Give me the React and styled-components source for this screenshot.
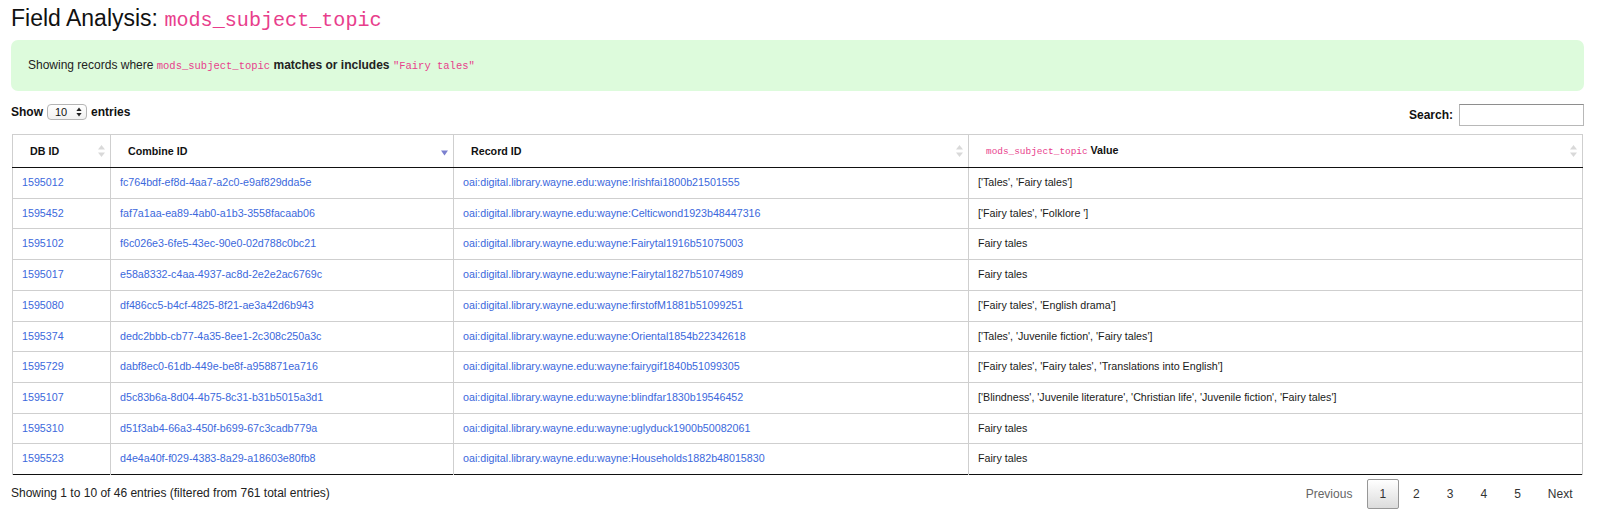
import React from "react";
import styled, { createGlobalStyle } from "styled-components";

const GlobalStyle = createGlobalStyle`
  html, body { margin: 0; padding: 0; background: #fff; }
  body {
    font-family: "Liberation Sans", Arial, Helvetica, sans-serif;
    color: #111;
  }
`;

const Page = styled.div`
  padding: 0 16px 0 11px;
`;

const Code = styled.code`
  font-family: "Liberation Mono", "DejaVu Sans Mono", monospace;
  font-size: 87.5%;
  color: #e83e8c;
`;

const Title = styled.h1`
  margin: 4px 0 0;
  font-size: 23px;
  line-height: 28px;
  font-weight: normal;
  color: #111;
`;

const Alert = styled.div`
  margin-top: 5px;
  background: #ddfbdc;
  border-radius: 7px;
  padding: 16px 17px;
  font-size: 12px;
  line-height: 18px;
  color: #222;
`;

const Controls = styled.div`
  margin-top: 13px;
  display: flex;
  justify-content: space-between;
  align-items: flex-start;
`;

const LengthLabel = styled.label`
  display: flex;
  align-items: center;
  gap: 4px;
  font-size: 12px;
  font-weight: bold;
  line-height: 16px;
  color: #111;
`;

const SelectWrap = styled.span`
  position: relative;
  display: inline-block;
  width: 40px;
  height: 16px;
`;

const Select = styled.select`
  appearance: none;
  -webkit-appearance: none;
  width: 40px;
  height: 16px;
  box-sizing: border-box;
  margin: 0;
  padding: 0 0 0 7px;
  border: 1px solid #b5b5b5;
  border-radius: 4px;
  background: linear-gradient(#ffffff, #f1f1f1);
  font-family: "Liberation Sans", Arial, sans-serif;
  font-size: 11px;
  line-height: 14px;
  color: #111;
`;

const SelectArrow = styled.svg`
  position: absolute;
  right: 5px;
  top: 3px;
  pointer-events: none;
`;

const SearchLabel = styled.label`
  display: flex;
  align-items: center;
  gap: 6px;
  font-size: 12px;
  font-weight: bold;
  color: #111;
`;

const SearchInput = styled.input`
  width: 125px;
  height: 22px;
  box-sizing: border-box;
  margin: 0;
  border: 1px solid #b8b8b8;
  border-top-color: #8e8e8e;
  padding: 2px 4px;
  font-size: 12px;
`;

const Table = styled.table`
  margin: 8px 0 0 1px;
  width: 1570px;
  table-layout: fixed;
  border-collapse: collapse;
  font-size: 10.7px;
  border-bottom: 1px solid #111;
`;

const Th = styled.th`
  position: relative;
  text-align: left;
  font-weight: bold;
  padding: 8px 18px 8px 17px;
  line-height: 14px;
  border: 1px solid #cfcfcf;
  border-bottom: 1px solid #111;
  color: #111;
  white-space: nowrap;
`;

const SortIcon = styled.svg`
  position: absolute;
  right: 5px;
  top: 50%;
  margin-top: -6px;
`;

const HeadCode = styled(Code)`
  font-size: 88%;
  font-weight: normal;
`;

const Td = styled.td`
  padding: 8px 9px;
  line-height: 13.7px;
  border-left: 1px solid #cfcfcf;
  border-right: 1px solid #cfcfcf;
  border-top: 1px solid #cfcfcf;
  color: #1a1a1a;
  white-space: nowrap;
`;

const Link = styled.a`
  color: #3b68dc;
  text-decoration: none;
`;

const Footer = styled.div`
  margin-top: 4px;
  display: flex;
  justify-content: space-between;
  align-items: flex-start;
`;

const Info = styled.div`
  padding-top: 6px;
  font-size: 12px;
  line-height: 17px;
  color: #222;
`;

const Paginate = styled.div`
  display: flex;
  margin-right: -1px;
`;

const PageButton = styled.a`
  box-sizing: border-box;
  display: inline-block;
  margin-left: 2px;
  padding: 6px 11.5px;
  font-size: 12px;
  line-height: 16px;
  border: 1px solid ${(p) => (p.$current ? "#979797" : "transparent")};
  border-radius: 2px;
  background: ${(p) => (p.$current ? "linear-gradient(#ffffff, #dcdcdc)" : "transparent")};
  color: ${(p) => (p.$disabled ? "#666" : "#333")};
  text-align: center;
`;

const SortBoth = () => (
  <SortIcon width="7" height="12" viewBox="0 0 7 12">
    <path d="M3.5 0 L7 4.5 L0 4.5 Z" fill="#d9d9d9" />
    <path d="M3.5 12 L7 7.5 L0 7.5 Z" fill="#d9d9d9" />
  </SortIcon>
);

const SortDesc = () => (
  <SortIcon width="7" height="12" viewBox="0 0 7 12">
    <path d="M3.5 10.5 L7 5.5 L0 5.5 Z" fill="#7b80cf" />
  </SortIcon>
);

const rows = [
  ["1595012", "fc764bdf-ef8d-4aa7-a2c0-e9af829dda5e", "oai:digital.library.wayne.edu:wayne:Irishfai1800b21501555", "['Tales', 'Fairy tales']"],
  ["1595452", "faf7a1aa-ea89-4ab0-a1b3-3558facaab06", "oai:digital.library.wayne.edu:wayne:Celticwond1923b48447316", "['Fairy tales', 'Folklore ']"],
  ["1595102", "f6c026e3-6fe5-43ec-90e0-02d788c0bc21", "oai:digital.library.wayne.edu:wayne:Fairytal1916b51075003", "Fairy tales"],
  ["1595017", "e58a8332-c4aa-4937-ac8d-2e2e2ac6769c", "oai:digital.library.wayne.edu:wayne:Fairytal1827b51074989", "Fairy tales"],
  ["1595080", "df486cc5-b4cf-4825-8f21-ae3a42d6b943", "oai:digital.library.wayne.edu:wayne:firstofM1881b51099251", "['Fairy tales', 'English drama']"],
  ["1595374", "dedc2bbb-cb77-4a35-8ee1-2c308c250a3c", "oai:digital.library.wayne.edu:wayne:Oriental1854b22342618", "['Tales', 'Juvenile fiction', 'Fairy tales']"],
  ["1595729", "dabf8ec0-61db-449e-be8f-a958871ea716", "oai:digital.library.wayne.edu:wayne:fairygif1840b51099305", "['Fairy tales', 'Fairy tales', 'Translations into English']"],
  ["1595107", "d5c83b6a-8d04-4b75-8c31-b31b5015a3d1", "oai:digital.library.wayne.edu:wayne:blindfar1830b19546452", "['Blindness', 'Juvenile literature', 'Christian life', 'Juvenile fiction', 'Fairy tales']"],
  ["1595310", "d51f3ab4-66a3-450f-b699-67c3cadb779a", "oai:digital.library.wayne.edu:wayne:uglyduck1900b50082061", "Fairy tales"],
  ["1595523", "d4e4a40f-f029-4383-8a29-a18603e80fb8", "oai:digital.library.wayne.edu:wayne:Households1882b48015830", "Fairy tales"],
];

export default function App() {
  return (
    <>
      <GlobalStyle />
      <Page>
        <Title>
          Field Analysis: <Code>mods_subject_topic</Code>
        </Title>
        <Alert>
          Showing records where <Code>mods_subject_topic</Code> <b>matches or includes</b>{" "}
          <Code>"Fairy tales"</Code>
        </Alert>
        <Controls>
          <LengthLabel>
            Show
            <SelectWrap>
              <Select defaultValue="10">
                <option value="10">10</option>
                <option value="25">25</option>
                <option value="50">50</option>
                <option value="100">100</option>
              </Select>
              <SelectArrow width="6" height="10" viewBox="0 0 6 10">
                <path d="M3 0.5 L5.6 4 L0.4 4 Z" fill="#222" />
                <path d="M3 9.5 L5.6 6 L0.4 6 Z" fill="#222" />
              </SelectArrow>
            </SelectWrap>
            entries
          </LengthLabel>
          <SearchLabel>
            Search:
            <SearchInput type="search" />
          </SearchLabel>
        </Controls>
        <Table>
          <colgroup>
            <col style={{ width: 98 }} />
            <col style={{ width: 343 }} />
            <col style={{ width: 515 }} />
            <col style={{ width: 614 }} />
          </colgroup>
          <thead>
            <tr>
              <Th>
                DB ID
                <SortBoth />
              </Th>
              <Th>
                Combine ID
                <SortDesc />
              </Th>
              <Th>
                Record ID
                <SortBoth />
              </Th>
              <Th>
                <HeadCode>mods_subject_topic</HeadCode> Value
                <SortBoth />
              </Th>
            </tr>
          </thead>
          <tbody>
            {rows.map((r) => (
              <tr key={r[0]}>
                <Td>
                  <Link href="#">{r[0]}</Link>
                </Td>
                <Td>
                  <Link href="#">{r[1]}</Link>
                </Td>
                <Td>
                  <Link href="#">{r[2]}</Link>
                </Td>
                <Td>{r[3]}</Td>
              </tr>
            ))}
          </tbody>
        </Table>
        <Footer>
          <Info>Showing 1 to 10 of 46 entries (filtered from 761 total entries)</Info>
          <Paginate>
            <PageButton $disabled>Previous</PageButton>
            <PageButton $current>1</PageButton>
            <PageButton>2</PageButton>
            <PageButton>3</PageButton>
            <PageButton>4</PageButton>
            <PageButton>5</PageButton>
            <PageButton>Next</PageButton>
          </Paginate>
        </Footer>
      </Page>
    </>
  );
}
